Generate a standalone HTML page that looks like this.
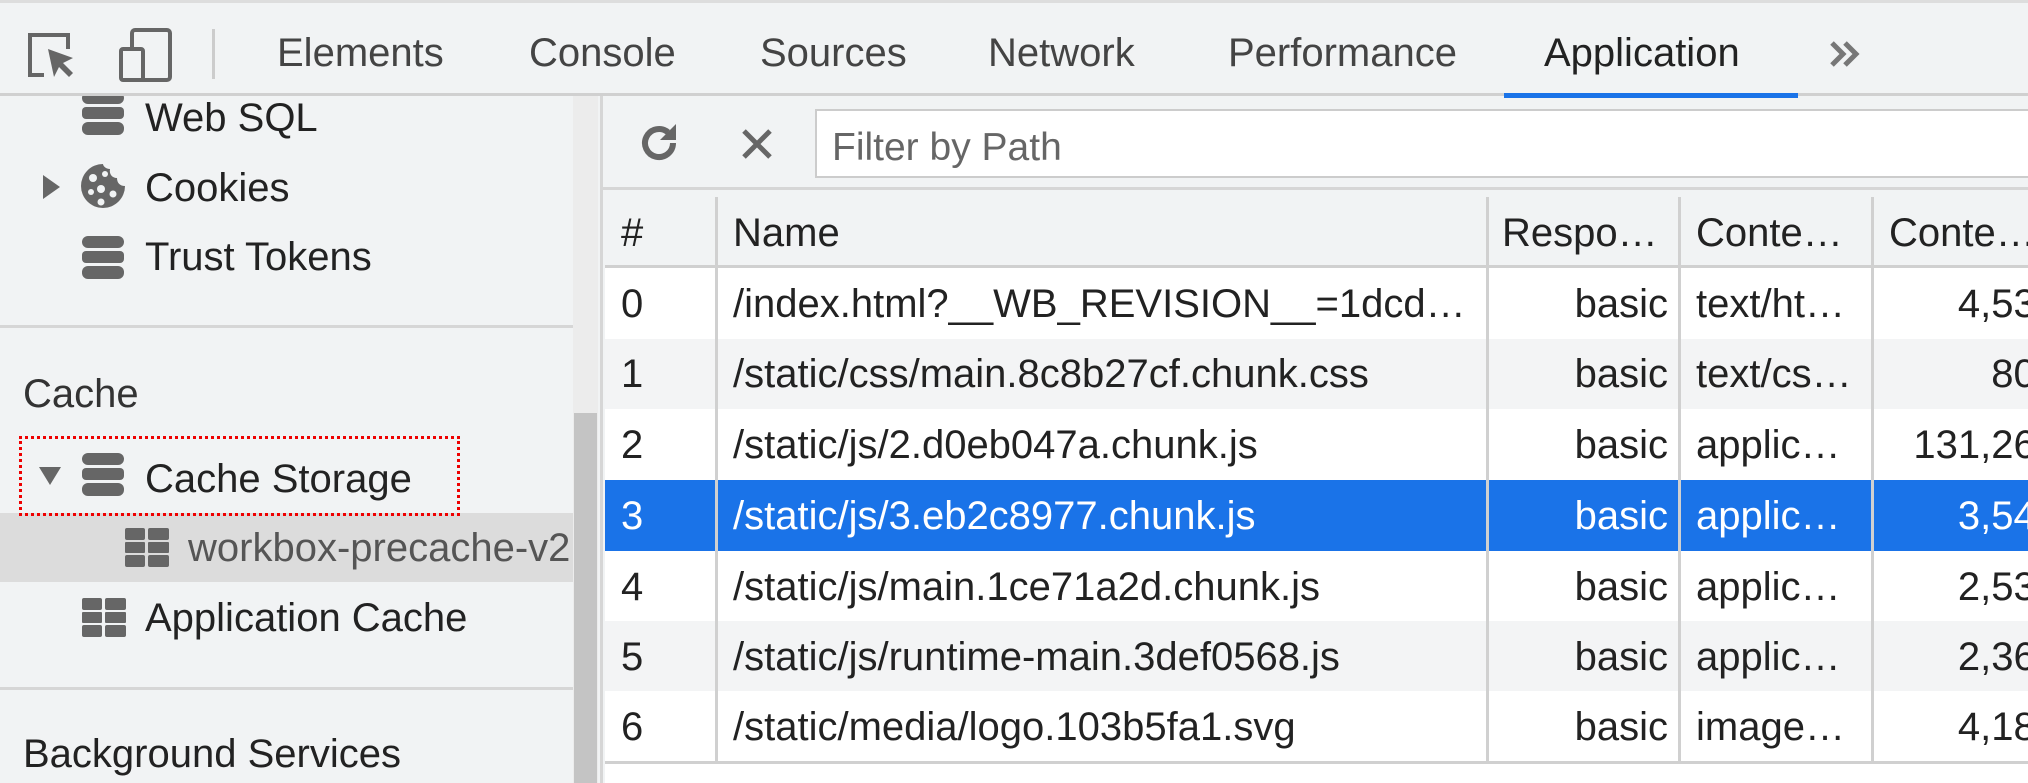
<!DOCTYPE html>
<html><head><meta charset="utf-8"><style>
*{box-sizing:border-box;margin:0;padding:0}
body{width:2028px;height:783px;overflow:hidden;background:#f1f3f4;font-family:"Liberation Sans",sans-serif;color:#222;position:relative}
.abs{position:absolute}
.tabs{left:0;top:0;width:2028px;height:96px;background:#f1f3f4;border-bottom:3px solid #d0d0d0;border-top:3px solid #ddd}
.tab{position:absolute;top:28px;font-size:40px;color:#444}
.side{left:0;top:96px;width:573px;height:687px;background:#f1f3f4;overflow:hidden}
.it{position:absolute;font-size:40px;color:#222}
.hr{position:absolute;left:0;width:573px;height:3px;background:#d6d6d6}
.row{position:absolute;left:0;width:1423px;height:70px;font-size:40px}
.row span{position:absolute;top:14px;white-space:nowrap}
.row span.n{max-width:740px;overflow:hidden;text-overflow:ellipsis}
.vl{position:absolute;top:197px;width:3px;height:564px;background:#d0d0d0}
</style></head><body>
<div class="abs tabs">
 <svg class="abs" style="left:26px;top:26px" width="54" height="54" viewBox="0 0 54 54"><path d="M18 46H4V6h38v14" fill="none" stroke="#666" stroke-width="4"/><path d="M22 20l6 28 5-10 10 10 4-4-10-10 10-5z" fill="#666"/></svg>
 <svg class="abs" style="left:118px;top:24px" width="56" height="56" viewBox="0 0 56 56"><rect x="14" y="3" width="38" height="50" rx="3" fill="none" stroke="#666" stroke-width="4"/><rect x="3" y="22" width="22" height="31" rx="2" fill="#f1f3f4" stroke="#666" stroke-width="4"/></svg>
 <div class="abs" style="left:212px;top:26px;width:3px;height:50px;background:#ccc"></div>
 <div class="tab" style="left:277px">Elements</div>
 <div class="tab" style="left:529px">Console</div>
 <div class="tab" style="left:760px">Sources</div>
 <div class="tab" style="left:988px">Network</div>
 <div class="tab" style="left:1228px">Performance</div>
 <div class="tab" style="left:1544px;color:#222">Application</div>
 <svg class="abs" style="left:1828px;top:36px" width="34" height="30" viewBox="0 0 34 30"><path d="M4 4l11 11L4 26M17 4l11 11-11 11" fill="none" stroke="#777" stroke-width="5"/></svg>
 <div class="abs" style="left:1504px;top:90px;width:294px;height:5px;background:#1a73e8"></div>
</div>

<div class="abs side">
 <svg class="abs" style="left:80px;top:-4px" width="46" height="46" viewBox="0 0 46 46"><g fill="#666"><rect x="2" y="0" width="42" height="12" rx="6"/><rect x="2" y="15" width="42" height="12" rx="4"/><rect x="2" y="30" width="42" height="13" rx="6"/></g></svg>
 <div class="it" style="left:145px;top:0px">Web SQL</div>
 <div class="abs" style="left:579px;top:14px;width:0;height:0;border:6px solid transparent;border-bottom:8px solid #555;border-top:0"></div>
 <div class="abs" style="left:43px;top:79px;width:0;height:0;border-top:12px solid transparent;border-bottom:12px solid transparent;border-left:17px solid #666"></div>
 <svg class="abs" style="left:79px;top:66px" width="48" height="48" viewBox="0 0 48 48"><path d="M24 2a22 22 0 1 0 22 22c-5 0-8-3-8-8-5 0-8-4-7-9-4 0-7-3-7-5z" fill="#666"/><g fill="#f1f3f4"><circle cx="14" cy="16" r="4"/><circle cx="22" cy="27" r="4"/><circle cx="12" cy="30" r="3"/><circle cx="34" cy="32" r="3.5"/><circle cx="22" cy="40" r="3.5"/><circle cx="26" cy="12" r="3"/></g></svg>
 <div class="it" style="left:145px;top:70px">Cookies</div>
 <svg class="abs" style="left:80px;top:140px" width="46" height="46" viewBox="0 0 46 46"><g fill="#666"><rect x="2" y="0" width="42" height="12" rx="6"/><rect x="2" y="15" width="42" height="12" rx="4"/><rect x="2" y="30" width="42" height="13" rx="6"/></g></svg>
 <div class="it" style="left:145px;top:139px">Trust Tokens</div>
 <div class="hr" style="top:229px"></div>
 <div class="it" style="left:23px;top:276px;color:#333">Cache</div>
 <div class="abs" style="left:0;top:417px;width:573px;height:69px;background:#dcdcdc"></div>
 <div class="abs" style="left:19px;top:340px;width:441px;height:80px;border:3px dotted #e00"></div>
 <div class="abs" style="left:39px;top:371px;width:0;height:0;border-left:11px solid transparent;border-right:11px solid transparent;border-top:18px solid #666"></div>
 <svg class="abs" style="left:80px;top:357px" width="46" height="46" viewBox="0 0 46 46"><g fill="#666"><rect x="2" y="0" width="42" height="12" rx="6"/><rect x="2" y="15" width="42" height="12" rx="4"/><rect x="2" y="30" width="42" height="13" rx="6"/></g></svg>
 <div class="it" style="left:145px;top:361px">Cache Storage</div>
 <svg class="abs" style="left:125px;top:432px" width="44" height="40" viewBox="0 0 44 40"><g fill="#666"><rect x="0" y="0" width="20" height="12" rx="2"/><rect x="23" y="0" width="21" height="12" rx="2"/><rect x="0" y="14" width="20" height="11" rx="1"/><rect x="23" y="14" width="21" height="11" rx="1"/><rect x="0" y="27" width="20" height="12" rx="2"/><rect x="23" y="27" width="21" height="12" rx="2"/></g></svg>
 <div class="it" style="left:188px;top:430px;color:#555;white-space:nowrap;width:385px;overflow:hidden">workbox-precache-v2</div>
 <svg class="abs" style="left:82px;top:502px" width="44" height="40" viewBox="0 0 44 40"><g fill="#666"><rect x="0" y="0" width="20" height="12" rx="2"/><rect x="23" y="0" width="21" height="12" rx="2"/><rect x="0" y="14" width="20" height="11" rx="1"/><rect x="23" y="14" width="21" height="11" rx="1"/><rect x="0" y="27" width="20" height="12" rx="2"/><rect x="23" y="27" width="21" height="12" rx="2"/></g></svg>
 <div class="it" style="left:145px;top:500px">Application Cache</div>
 <div class="hr" style="top:591px"></div>
 <div class="it" style="left:23px;top:636px">Background Services</div>
</div>
<div class="abs" style="left:573px;top:96px;width:25px;height:687px;background:#ececec"></div>
<div class="abs" style="left:574px;top:413px;width:23px;height:370px;background:#c4c4c4"></div>
<div class="abs" style="left:600px;top:96px;width:3px;height:687px;background:#d6d6d6"></div>

<svg class="abs" style="left:636px;top:120px" width="46" height="46" viewBox="0 0 46 46"><path d="M37 23a14 14 0 1 1-5-10.7" fill="none" stroke="#666" stroke-width="6"/><path d="M40 4v16H24z" fill="#666"/></svg>
<svg class="abs" style="left:740px;top:127px" width="34" height="34" viewBox="0 0 34 34"><path d="M4 4l26 26M30 4L4 30" stroke="#666" stroke-width="5"/></svg>
<div class="abs" style="left:815px;top:109px;width:1213px;height:69px;background:#fff;border:2px solid #ccc;border-right:0"></div>
<div class="abs" style="left:832px;top:126px;font-size:39px;color:#666">Filter by Path</div>
<div class="abs" style="left:603px;top:187px;width:1425px;height:3px;background:#d6d6d6"></div>

<div class="abs" style="left:605px;top:197px;width:1423px;height:71px;background:#f1f3f4;border-bottom:3px solid #d0d0d0"></div>
<div class="row" style="top:197px;left:605px"><span style="left:16px">#</span><span style="left:128px">Name</span><span style="left:897px">Respo…</span><span style="left:1091px">Conte…</span><span style="left:1284px">Conte…</span></div>
<div class="abs" style="left:605px;top:268px;width:1423px;height:493px;background:#fff"></div>
<div class="abs" style="left:605px;top:339px;width:1423px;height:70px;background:#f3f4f5"></div>
<div class="abs" style="left:605px;top:480px;width:1423px;height:71px;background:#1a73e8"></div>
<div class="abs" style="left:605px;top:621px;width:1423px;height:70px;background:#f3f4f5"></div>
<div class="abs" style="left:605px;top:761px;width:1423px;height:3px;background:#d0d0d0"></div>
<div class="abs" style="left:605px;top:764px;width:1423px;height:19px;background:#fff"></div>

<div class="vl" style="left:715px"></div>
<div class="vl" style="left:1486px"></div>
<div class="vl" style="left:1678px"></div>
<div class="vl" style="left:1871px"></div>

<div style="position:absolute;left:605px;top:268px;width:1423px;height:493px;overflow:hidden">
<div class="row" style="top:0"><span style="left:16px">0</span><span class="n" style="left:128px">/index.html?__WB_REVISION__=1dcd0…</span><span style="right:360px">basic</span><span style="left:1091px">text/ht…</span><span style="right:-30px">4,537</span></div>
<div class="row" style="top:70px"><span style="left:16px">1</span><span class="n" style="left:128px">/static/css/main.8c8b27cf.chunk.css</span><span style="right:360px">basic</span><span style="left:1091px">text/cs…</span><span style="right:-30px">804</span></div>
<div class="row" style="top:141px"><span style="left:16px">2</span><span class="n" style="left:128px">/static/js/2.d0eb047a.chunk.js</span><span style="right:360px">basic</span><span style="left:1091px">applic…</span><span style="right:-30px">131,260</span></div>
<div class="row" style="top:212px;color:#fff"><span style="left:16px">3</span><span class="n" style="left:128px">/static/js/3.eb2c8977.chunk.js</span><span style="right:360px">basic</span><span style="left:1091px">applic…</span><span style="right:-30px">3,541</span></div>
<div class="row" style="top:283px"><span style="left:16px">4</span><span class="n" style="left:128px">/static/js/main.1ce71a2d.chunk.js</span><span style="right:360px">basic</span><span style="left:1091px">applic…</span><span style="right:-30px">2,531</span></div>
<div class="row" style="top:353px"><span style="left:16px">5</span><span class="n" style="left:128px">/static/js/runtime-main.3def0568.js</span><span style="right:360px">basic</span><span style="left:1091px">applic…</span><span style="right:-30px">2,361</span></div>
<div class="row" style="top:423px"><span style="left:16px">6</span><span class="n" style="left:128px">/static/media/logo.103b5fa1.svg</span><span style="right:360px">basic</span><span style="left:1091px">image…</span><span style="right:-30px">4,181</span></div>
</div>
</body></html>
